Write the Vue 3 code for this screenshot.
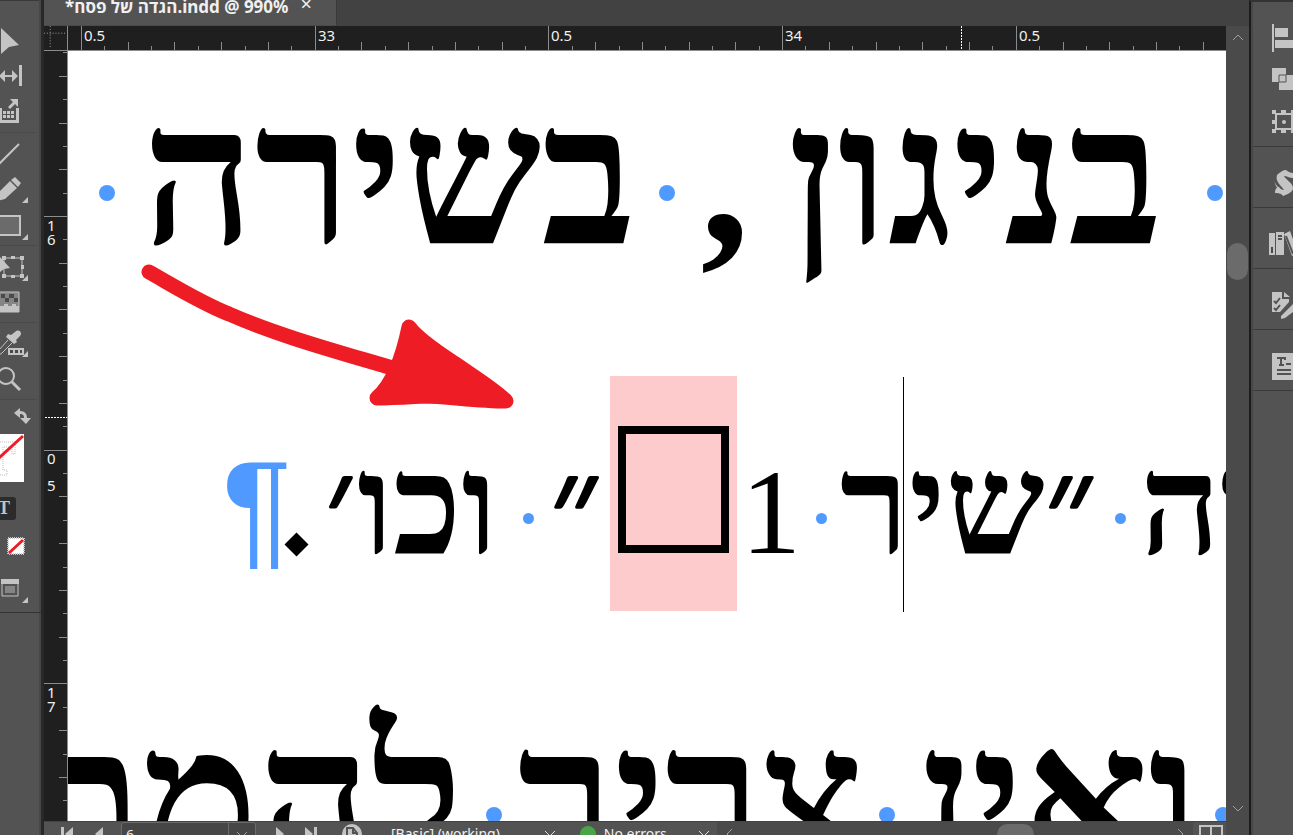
<template>
  <div class="workspace">
    <aside class="toolbar">
      <button class="tool" aria-label="Direct selection">
        <svg viewBox="0 -18 38 36"><path d="M1-12 19 5 9 7 1 14Z" /></svg>
      </button>
      <button class="tool" aria-label="Gap tool">
        <svg viewBox="0 -18 38 36">
          <path d="M19-11h3v21h-3ZM0-1h16v2H0Z" />
          <path d="M12-6 18 0 12 6ZM5-6-1 0 5 6Z" />
        </svg>
      </button>
      <button class="tool" aria-label="Content collector">
        <svg viewBox="0 -18 38 36">
          <path d="M10-13h8v8l-3-3-5 5-2-2 5-5ZM0-4h2V8h14V-4h3v15H0Z" />
          <path d="M3-1h3v3H3ZM7-1h3v3H7ZM11-1h3v3h-3ZM3 3h3v3H3ZM7 3h3v3H7ZM11 3h3v3h-3Z" />
        </svg>
      </button>
      <hr>
      <button class="tool" aria-label="Line">
        <svg viewBox="0 -18 38 36"><path class="line" d="M-1 11 19-9" /></svg>
      </button>
      <button class="tool" aria-label="Pencil">
        <svg viewBox="0 -18 38 36">
          <path d="M10-8 17-1 5 10-3 12-1 3ZM11-9l4-3 6 6-3 4Z" />
          <path class="corner" d="M28 8v6h-6Z" />
        </svg>
      </button>
      <button class="tool" aria-label="Rectangle frame">
        <svg viewBox="0 -18 38 36">
          <path class="line soft" d="M-2-9h22v19H-2Z" />
          <path class="corner" d="M28 9v6h-6Z" />
        </svg>
      </button>
      <hr>
      <button class="tool" aria-label="Free transform">
        <svg viewBox="0 -18 38 36">
          <path class="line slim" d="M4-8h18V10H4Z" />
          <path d="M2-10h4v4H2ZM11-10h4v3h-4ZM20-10h4v4h-4ZM21-1h3v4h-3ZM20 8h4v4h-4ZM11 9h4v3h-4ZM2 8h4v4H2ZM0-9 10 2 4 3 0 6Z" />
          <path class="corner" d="M28 9v6h-6Z" />
        </svg>
      </button>
      <button class="tool" aria-label="Gradient feather">
        <svg viewBox="0 -18 38 36">
          <path class="muted" d="M0-10h19v20H0Z" />
          <path class="shade" d="M1-8h4v4H1ZM9-8h5v4H9ZM5-4h4v4H5ZM14-4h4v4h-4Z" />
          <path d="M0 4h4v-2h4v2h4v-2h4v2h3v6H0Z" />
          <path class="line slim" d="M-1-10h20V10H-1Z" />
        </svg>
      </button>
      <hr>
      <button class="tool" aria-label="Eyedropper">
        <svg viewBox="0 -18 38 36">
          <path d="M15-11c4-4 8 1 5 4l-4 4 1 2-3 2-8-7 2-3 3 1Z" />
          <path class="line slim" d="M8-3-1 7M12 0 2 10l-3 2" />
          <path d="M8 5h16v7H8Z" />
          <path class="shade" d="M10 7h3v3h-3ZM15 7h3v3h-3ZM20 7h2v3h-2Z" />
          <path class="corner" d="M28 8v6h-6Z" />
        </svg>
      </button>
      <button class="tool" aria-label="Zoom">
        <svg viewBox="0 -18 38 36">
          <circle class="line" cx="6" cy="-3" r="8" />
          <path class="line thick" d="m12 3 8 8" />
        </svg>
      </button>
      <hr>
      <button class="tool swap" aria-label="Swap fill and stroke">
        <svg viewBox="0 -13 38 26">
          <path d="m14-2 6-5v3c5 0 7 3 7 7h4l-5 6-6-6h4c0-3-1-4-4-4v4Z" />
        </svg>
      </button>
      <button class="tool fill" aria-label="Fill">
        <svg viewBox="0 -30 38 60">
          <path class="white" d="M0-24h24v48H0Z" />
          <path class="ghost" d="M0-16h15v12h-3v-7H3v23h4v5H0" />
          <path class="slash" d="M-1 0 23-22" />
        </svg>
      </button>
      <button class="tool type" aria-label="Formatting affects text"><span>T</span></button>
      <button class="tool" aria-label="Apply none">
        <svg viewBox="0 -18 38 36">
          <path class="none-box" d="M8-8h16V8H8Z" />
          <path class="slash" d="M9 7 23-6" />
        </svg>
      </button>
      <button class="tool mode" aria-label="Screen mode">
        <svg viewBox="0 -23 38 46">
          <path class="line slim" d="M2-7h16V8H2Z" />
          <path d="M1-9h18v5H1Z" />
          <path class="muted" d="M5-2h10v7H5Z" />
          <path class="corner" d="M28 9v6h-6Z" />
        </svg>
      </button>
    </aside>

    <main class="document">
      <header class="tabs">
        <div class="tab">
          <span dir="ltr">*הגדה של פסח.indd @ 990%</span>
          <button class="close" aria-label="Close">×</button>
        </div>
      </header>

      <div class="ruler-corner">
        <svg viewBox="0 0 24 25"><path d="M0 7.5h23M6.5 0v24" /></svg>
      </div>

      <div class="ruler top">
        <svg>
          <path class="tick" :d="topTicks" />
          <path class="pointer" d="M893.5 0v24" />
          <text v-for="m in topLabels" :key="m.at" :x="m.at + 3" y="15">{{ m.text }}</text>
        </svg>
      </div>

      <div class="ruler left">
        <svg>
          <path class="tick" :d="leftTicks" />
          <path class="pointer" d="M1 366.5h22" />
          <template v-for="m in leftLabels" :key="m.at">
            <text v-for="(c, i) in m.text" :key="i" x="3" :y="m.at + 14 + i * m.step">{{ c }}</text>
          </template>
        </svg>
      </div>

      <section class="page" dir="rtl">
        <p v-for="(line, n) in lines" :key="n" :class="['line-row', line.size]">
          <span
            v-for="(run, i) in line.runs"
            :key="i"
            :class="['run', run.kind]"
            :style="{ flexGrow: run.share }"
          >{{ run.text }}</span>
        </p>
        <svg class="annotation">
          <path class="caret" d="M835.5 326v235" />
          <path class="shaft" d="M81 221c20 11 50 30 80 42 50 22 110 38 170 56" />
          <path class="head" d="M341 276c6 8 22 21 45 36 20 14 40 26 52 38-30 0-60-5-82-5-18 1-32 2-47 2 16-14 26-42 32-71Z" />
        </svg>
      </section>

      <div class="scroll-y">
        <svg class="chev up" viewBox="0 0 12 8"><path d="m1 7 5-5 5 5" /></svg>
        <div class="thumb"></div>
        <svg class="chev down" viewBox="0 0 12 8"><path d="m1 1 5 5 5-5" /></svg>
      </div>

      <footer class="status">
        <button class="nav first" aria-label="First page"><svg viewBox="0 0 14 14"><path d="M0 0h3v14H0ZM12 0v14L4 7Z" /></svg></button>
        <button class="nav" aria-label="Previous page"><svg viewBox="0 0 14 14"><path d="M8 0v14L0 7Z" /></svg></button>
        <div class="page-box">
          <input v-model="pageNo" aria-label="Page">
          <button aria-label="Choose page"><svg class="chev" viewBox="0 0 12 8"><path d="m1 1 5 5 5-5" /></svg></button>
        </div>
        <button class="nav" aria-label="Next page"><svg viewBox="0 0 14 14"><path d="M1 0v14l8-7Z" /></svg></button>
        <button class="nav last" aria-label="Last page"><svg viewBox="0 0 14 14"><path d="M0 0v14l8-7ZM9 0h3v14H9Z" /></svg></button>
        <button class="nav open" aria-label="Open">
          <svg viewBox="0 0 20 20"><circle cx="10" cy="10" r="10" /><path class="sheet" d="M5 4h6l4 5v9H5ZM11 4v5h4" /></svg>
        </button>
        <button class="profile">[Basic] (working)<svg class="chev" viewBox="0 0 12 8"><path d="m1 1 5 5 5-5" /></svg></button>
        <button class="errors"><i></i>No errors<svg class="chev" viewBox="0 0 12 8"><path d="m1 1 5 5 5-5" /></svg></button>
        <div class="scroll-x">
          <svg class="chev" viewBox="0 0 8 12"><path d="M7 1 2 6l5 5" /></svg>
          <div class="thumb"></div>
          <svg class="chev" viewBox="0 0 8 12"><path d="m1 1 5 5-5 5" /></svg>
        </div>
        <button class="split" aria-label="Split view"><svg viewBox="0 0 24 20"><path d="M1 1h22v18H1ZM12 1v18" /></svg></button>
      </footer>
    </main>

    <aside class="panels">
      <div class="group first">
        <button aria-label="Align">
          <svg viewBox="0 -21 40 42"><path d="M19-14h2v28h-2ZM22-10h13v9H22ZM22 2h18v8H22Z" /></svg>
        </button>
        <button aria-label="Pathfinder">
          <svg viewBox="0 -21 40 42">
            <path d="M19-12h14v14H19Z" /><path d="M26-5h14v15H26Z" />
            <path class="cut slim" d="M26-5h7v7h-7Z" />
          </svg>
        </button>
        <button aria-label="Transform">
          <svg viewBox="0 -21 40 42">
            <path class="line" d="M23-8h16V7H23Z" />
            <path d="M19-12h4v4h-4ZM28-12h5v4h-5ZM38-12h4v4h-4ZM19-2h4v4h-4ZM19 7h4v4h-4ZM28 7h5v4h-5ZM38 7h4v4h-4Z" />
            <circle cx="31" cy="0" r="2" />
          </svg>
        </button>
      </div>
      <div class="group">
        <button aria-label="Stylesheets">
          <svg viewBox="0 -21 40 42">
            <path d="M24-8c3-3 6-5 9-5 2 2 5 3 7 3v5c-4 0-6-2-9-2 2 4 9 7 9 12 0 4-5 6-10 8-2-3-5-3-8-3 0-4 2-6 4-6 1 2 3 3 5 3-3-5-9-8-7-15Z" />
            <path d="M21-3c1 5 4 6 6 9-3 0-5-4-6-9Z" />
          </svg>
        </button>
      </div>
      <div class="group">
        <button aria-label="Libraries">
          <svg viewBox="0 -21 40 42">
            <path d="M16-11h6v22h-6ZM23-12h8v23h-8ZM31-10l6-3 8 22-6 3Z" />
            <path class="cut" d="M25-8h4M25-5h4M33-8l7 18" /><path class="shade" d="M18 3h2v6h-2Z" />
          </svg>
        </button>
      </div>
      <div class="group">
        <button aria-label="Preflight">
          <svg viewBox="0 -21 40 42">
            <path d="M19-13h10v7h7v3l-9 10H19ZM31-13l6 5h-6ZM28 11 40-1v8l-8 6-4 1Z" />
            <path class="cut" d="m21-4 2 2 4-5M21 3l2 2 4-5" />
          </svg>
        </button>
      </div>
      <div class="group">
        <button aria-label="Text styles">
          <svg viewBox="0 -21 40 42">
            <path d="M19-13h21v27H19Z" />
            <path class="cut" d="M25-7v-1h7v2M28-8v7M26-1h5M33-2h5M24 4h14M24 8h14" />
          </svg>
        </button>
      </div>
    </aside>
  </div>
</template>

<script setup>
import { ref } from 'vue';

const pageNo = ref('6');

// share = how much of the line each run takes
const lines = [
  {
    size: 'large',
    runs: [
      { kind: 'dot', share: 22 },
      { kind: 'word', share: 458, text: 'בניגון' },
      { kind: 'word', share: 42, text: ',' },
      { kind: 'blank', share: 26 },
      { kind: 'dot', share: 22 },
      { kind: 'word', share: 534, text: 'בשירה' },
      { kind: 'dot', share: 30 },
      { kind: 'blank', share: 24 },
    ],
  },
  {
    size: 'small',
    runs: [
      { kind: 'word cut-start', share: 86, text: 'בשירה' },
      { kind: 'dot', share: 39 },
      { kind: 'word', share: 264, text: '״שיר' },
      { kind: 'dot', share: 32 },
      { kind: 'word digit', share: 68, text: '1' },
      { kind: 'missing', share: 127 },
      { kind: 'word', share: 67, text: '״' },
      { kind: 'dot', share: 29 },
      { kind: 'word', share: 206, text: 'וכו׳' },
      { kind: 'stop', share: 24 },
      { kind: 'pilcrow', share: 54, text: '¶' },
      { kind: 'blank', share: 162 },
    ],
  },
  {
    size: 'large',
    runs: [
      { kind: 'dot', share: 6 },
      { kind: 'word', share: 320, text: 'ואין' },
      { kind: 'dot', share: 26 },
      { kind: 'word', share: 366, text: 'צריך' },
      { kind: 'dot', share: 28 },
      { kind: 'word cut-end', share: 395, text: 'להמתין' },
    ],
  },
];

const topLabels = [
  { at: 13, text: '0.5' },
  { at: 247, text: '33' },
  { at: 480, text: '0.5' },
  { at: 714, text: '34' },
  { at: 948, text: '0.5' },
];
const leftLabels = [
  { at: 166, text: '16', step: 14 },
  { at: 399, text: '05', step: 27 },
  { at: 633, text: '17', step: 14 },
];

// ten ticks per half unit, every other one longer
const ticks = (origin, depth, draw) => {
  let d = '';
  for (let i = -10; i < 90; i++) {
    const pos = Math.round(origin + i * 23.37) + 0.5;
    if (pos < 0) continue;
    const len = i % 10 === 0 ? depth : i % 2 === 0 ? 8 : 4;
    d += draw(pos, len);
  }
  return d;
};
const topTicks = ticks(13, 24, (p, len) => `M${p} ${24 - len}v${len}`);
const leftTicks = ticks(165, 23, (p, len) => `M${23 - len} ${p}h${len}`);
</script>

<style>
html,
body {
  margin: 0;
  background: #535353;
}
</style>

<style scoped>
.workspace {
  display: grid;
  grid-template-columns: 44px minmax(0, 1fr) 44px;
  height: 100vh;
  overflow: hidden;
  background: #535353;
  color: #f0f0f0;
  font-family: "Noto Sans", "Open Sans", sans-serif;
  font-size: 14px;
}

button {
  display: block;
  padding: 0;
  border: 0;
  background: none;
  color: inherit;
  font: inherit;
}

svg {
  display: block;
  fill: #c4c4c4;
}

/* left toolbar */
.toolbar {
  box-sizing: border-box;
  padding-top: 22px;
  border-right: 3px solid #282828;
  box-shadow: inset -2px 0 #474747, inset 0 1px #3a3a3a;
}

.toolbar hr {
  width: 37px;
  height: 1px;
  margin: 2px 0;
  border: 0;
  background: #4a4a4a;
}

.tool {
  width: 38px;
  height: 36px;
}

.tool svg {
  width: 38px;
  height: 100%;
}

.tool.swap { height: 26px; }
.tool.fill { height: 60px; }

.tool.type {
  display: flex;
  align-items: center;
  height: 40px;
}

.tool.type span {
  width: 16px;
  height: 23px;
  border-radius: 0 3px 3px 0;
  background: #2b2b2b;
  color: #c4c4c4;
  font: bold 18px/23px "Liberation Serif", serif;
  text-indent: -2px;
  text-align: left;
}

.tool.mode {
  width: 41px;
  height: 49px;
  border-bottom: 1px solid #333;
}

.line {
  fill: none;
  stroke: #c4c4c4;
  stroke-width: 2;
}

.line.thick { stroke-width: 3; }
.line.slim { stroke-width: 1; }
.line.soft { fill: #6b6b6b; }
.muted { fill: #858585; }
.shade { fill: #4a4a4a; }
.white { fill: #fff; }

.ghost {
  fill: none;
  stroke: #bbb;
  stroke-dasharray: 1 1;
}

.slash {
  fill: none;
  stroke: #ed1c24;
  stroke-width: 3;
}

.none-box {
  fill: #fff;
  stroke: #c4c4c4;
  stroke-width: 2;
  stroke-dasharray: 1 1;
}

/* document window */
.document {
  display: grid;
  grid-template-columns: 24px minmax(0, 1fr) 23px;
  grid-template-rows: 26px 25px minmax(0, 1fr) 14px;
  min-width: 0;
  min-height: 0;
}

.tabs {
  grid-column: 1 / 4;
  overflow: hidden;
  background: #424242;
}

.tab {
  display: flex;
  gap: 12px;
  box-sizing: border-box;
  width: 293px;
  height: 26px;
  padding-left: 21px;
  border-right: 1px solid #383838;
  border-bottom: 1px solid #4a4a4a;
  background: #535353;
  font-size: 17px;
  font-weight: bold;
  line-height: 14px;
  white-space: nowrap;
}

.close {
  font-size: 20px;
  font-weight: normal;
  line-height: 8px;
  height: 8px;
}

.ruler,
.ruler-corner {
  box-sizing: border-box;
  overflow: hidden;
  background: #1f1f1f;
}

.ruler svg {
  width: 100%;
  height: 100%;
  fill: #f0f0f0;
  font-size: 15px;
}

.ruler-corner {
  border-right: 1px solid #8c8c8c;
  border-bottom: 1px solid #8c8c8c;
}

.ruler-corner path {
  fill: none;
  stroke: #aaa;
  stroke-dasharray: 1 2;
}

.ruler.top { border-bottom: 1px solid #8c8c8c; }
.ruler.left {
  grid-row: 3;
  border-right: 1px solid #8c8c8c;
}

.tick {
  fill: none;
  stroke: #8c8c8c;
}

.pointer {
  fill: none;
  stroke: #fff;
  stroke-dasharray: 2 1;
}

.page {
  position: relative;
  min-width: 0;
  overflow: hidden;
  background: #fff;
  color: #000;
  font-family: "Liberation Serif", serif;
  font-weight: bold;
}

.line-row {
  display: flex;
  height: 311px;
  margin: 0;
  line-height: 311px;
}

/* the page is scrolled a little past the top of its first line */
.line-row:first-child { margin-top: -24px; }

.large { font-size: 196px; }
.small { font-size: 140px; }

.run {
  display: flex;
  box-sizing: border-box;
  flex: 1 1 0;
  align-items: center;
  justify-content: center;
  min-width: 0;
  white-space: nowrap;
}

.large .word { padding-bottom: 12px; }
.small .word { padding-top: 24px; }
.small .digit { padding-top: 38px; }

.cut-start { justify-content: flex-end; }
.cut-end {
  justify-content: flex-start;
  padding-right: 17px;
}

.digit { font-weight: normal; font-size: 120px; }

.dot { padding-top: 20px; }
.small .dot { padding-top: 50px; }

.dot::before {
  flex: none;
  width: 16px;
  height: 16px;
  border-radius: 50%;
  background: #509aff;
  content: "";
}

.small .dot::before {
  width: 11px;
  height: 11px;
}

.missing {
  align-self: center;
  height: 235px;
  padding-bottom: 8px;
  background: #fdcbcb;
}

.missing::before {
  box-sizing: border-box;
  width: 111px;
  height: 127px;
  border: 8px solid #000;
  content: "";
}

.stop::before {
  flex: none;
  width: 17px;
  height: 17px;
  margin-top: 102px;
  background: #000;
  transform: rotate(45deg);
  content: "";
}

.pilcrow {
  padding-top: 28px;
  color: #509aff;
  font-family: "Liberation Sans", sans-serif;
  font-size: 130px;
  font-weight: normal;
}

.annotation {
  position: absolute;
  top: 0;
  left: 0;
  width: 100%;
  height: 100%;
}

.caret { stroke: #000; }

.shaft,
.head {
  fill: none;
  stroke: #ee1c24;
  stroke-width: 15;
  stroke-linecap: round;
  stroke-linejoin: round;
}

.head { fill: #ee1c24; }

.chev {
  width: 12px;
  height: 8px;
  fill: none;
  stroke: #a0a0a0;
}

.scroll-y {
  display: flex;
  grid-row: 2 / 5;
  grid-column: 3;
  flex-direction: column;
  align-items: center;
  justify-content: space-between;
  padding: 7px 0 22px;
  background: #4a4a4a;
}

.scroll-y .thumb {
  width: 21px;
  height: 37px;
  margin-bottom: 324px;
  border-radius: 11px;
  background: #6b6b6b;
}

.status {
  display: flex;
  grid-column: 1 / 3;
  align-items: flex-start;
  height: 30px;
  border-top: 1px solid #444;
  background: #535353;
  line-height: 24px;
}

.nav { padding-top: 5px; }
.nav svg { width: 14px; height: 14px; }
.nav.first { margin: 0 20px 0 17px; }

.page-box {
  display: flex;
  box-sizing: border-box;
  width: 135px;
  height: 26px;
  margin: 0 19px 0 12px;
  border: 1px solid #6b6b6b;
  border-radius: 3px;
  background: #464646;
}

.page-box input {
  flex: 1;
  min-width: 0;
  padding: 0 4px;
  border: 0;
  background: none;
  color: #f0f0f0;
  font: inherit;
}

.page-box button {
  width: 27px;
  border-left: 1px solid #6b6b6b;
}

.page-box .chev { margin: 0 auto; }
.nav.last { margin: 0 23px 0 16px; }
.nav.open { padding-top: 2px; }
.nav.open svg { width: 20px; height: 20px; }
.sheet { fill: #c4c4c4; stroke: #535353; stroke-width: 2; }

.profile,
.errors {
  display: flex;
  align-items: center;
  white-space: nowrap;
}

.profile { gap: 44px; margin: 0 24px 0 29px; }
.errors { gap: 31px; margin-right: 7px; }
.profile .chev,
.errors .chev { stroke: #ddd; }

.errors i {
  width: 16px;
  height: 16px;
  margin-right: -23px;
  border-radius: 50%;
  background: #47a447;
}

.scroll-x {
  display: flex;
  flex: 1;
  align-items: center;
  justify-content: space-between;
  height: 24px;
  padding: 0 8px;
  background: #4a4a4a;
}

.scroll-x .chev { width: 8px; height: 12px; }

.scroll-x .thumb {
  width: 37px;
  height: 21px;
  margin-left: 122px;
  border-radius: 11px;
  background: #6b6b6b;
}

.split { padding: 3px 3px 0 6px; }

.split svg {
  width: 24px;
  height: 20px;
  fill: none;
  stroke: #c4c4c4;
  stroke-width: 2;
}

/* collapsed panels */
.panels {
  border-top: 2px solid #333;
  border-left: 2px solid #1c1c1c;
  box-shadow: inset 2px 0 #474747;
}

.panels .group {
  display: flex;
  box-sizing: border-box;
  flex-direction: column;
  justify-content: center;
  height: 61px;
  margin-left: 2px;
  padding-top: 12px;
  border-bottom: 1px solid #3a3a3a;
}

.panels .group.first { height: 145px; }

.panels svg {
  width: 40px;
  height: 42px;
}

.cut {
  fill: none;
  stroke: #535353;
  stroke-width: 2;
}

.cut.slim { stroke-width: 1; }
</style>
